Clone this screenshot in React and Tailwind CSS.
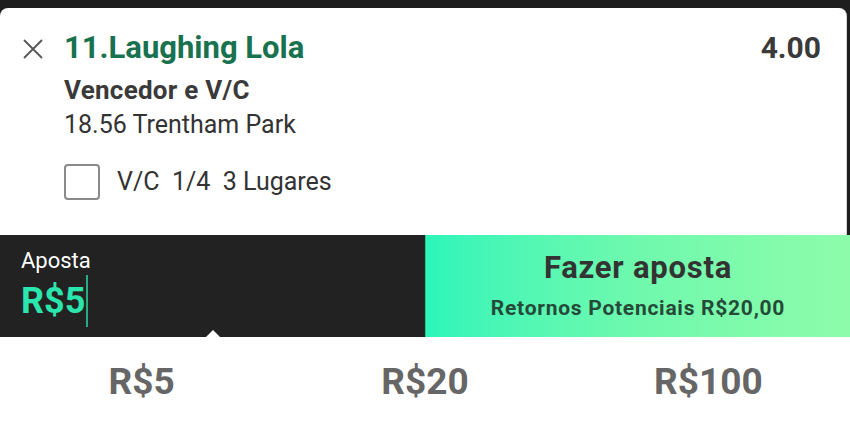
import React from 'react';

const QuickStake = ({ label }) => (
  <div className="flex-1 flex items-center justify-center pt-[6px] text-[37px] font-bold text-[#666666]">
    {label}
  </div>
);

const App = () => {
  return (
    <div className="w-[850px] h-[421px] bg-[#1e1e1e] pt-2 overflow-hidden" style={{ fontFamily: 'Roboto, "Noto Sans", sans-serif' }}>
      {/* selection card */}
      <div className="mr-[3px] h-[227px] bg-white rounded-t-lg border-r border-[#d6d6d6] flex pt-[22px]">
        <div className="w-[64px] flex justify-center pt-[9px] pl-[1px]">
          <svg width="20" height="20" viewBox="0 0 20 20" fill="none" stroke="#555" strokeWidth="1.8" strokeLinecap="round">
            <path d="M1.5 1.5 L18.5 18.5 M18.5 1.5 L1.5 18.5" />
          </svg>
        </div>
        <div className="flex-1 flex flex-col">
          <div className="flex items-baseline justify-between pr-[25px]">
            <span className="text-[31px] leading-[36px] font-bold text-[#18724f]">11.Laughing Lola</span>
            <span className="text-[30px] leading-[36px] font-bold text-[#3a3a3a]">4.00</span>
          </div>
          <div className="mt-[9px] text-[26px] leading-[30px] font-bold tracking-[0.01em] text-[#3a3a3a]">Vencedor e V/C</div>
          <div className="mt-[5px] text-[25px] leading-[30px] text-[#333333]">18.56 Trentham Park</div>
          <div className="mt-[24px] flex items-center gap-[17px]">
            <div className="w-[36px] h-[36px] rounded-[4px] border-2 border-[#8a8a8a]" />
            <span className="text-[25px] leading-[30px] text-[#333333] whitespace-pre">V/C  1/4  3 Lugares</span>
          </div>
        </div>
      </div>

      {/* stake + place bet */}
      <div className="flex h-[102px]">
        <div className="w-[425px] bg-[#222222] pl-[21px] pt-[13px]">
          <div className="text-[22px] leading-[26px] text-white">Aposta</div>
          <div className="flex items-center mt-[7px] h-[40px]">
            <span className="text-[36px] leading-[40px] font-bold text-[#2be5ae]">R$5</span>
            <span className="ml-[1px] w-[2px] h-[52px] shrink-0 bg-[#2be5ae] opacity-70" />
          </div>
        </div>
        <div className="flex-1 flex flex-col items-center pt-[15px] border-l border-[#1fc993] bg-gradient-to-r from-[#2bf5b9] via-[#6ff9ad] to-[#8dfcaa]">
          <div className="text-[31px] leading-[36px] font-bold tracking-[0.025em] text-[#333333]">Fazer aposta</div>
          <div className="mt-[9px] text-[21px] leading-[26px] font-bold tracking-[0.035em] text-[#254a38]">Retornos Potenciais R$20,00</div>
        </div>
      </div>

      {/* quick stakes */}
      <div className="relative flex h-[84px] bg-white">
        <div className="absolute left-[206px] -top-[7px] w-0 h-0 border-l-[7px] border-r-[7px] border-b-[7px] border-l-transparent border-r-transparent border-b-white" />
        <QuickStake label="R$5" />
        <QuickStake label="R$20" />
        <QuickStake label="R$100" />
      </div>
    </div>
  );
};

export default App;
